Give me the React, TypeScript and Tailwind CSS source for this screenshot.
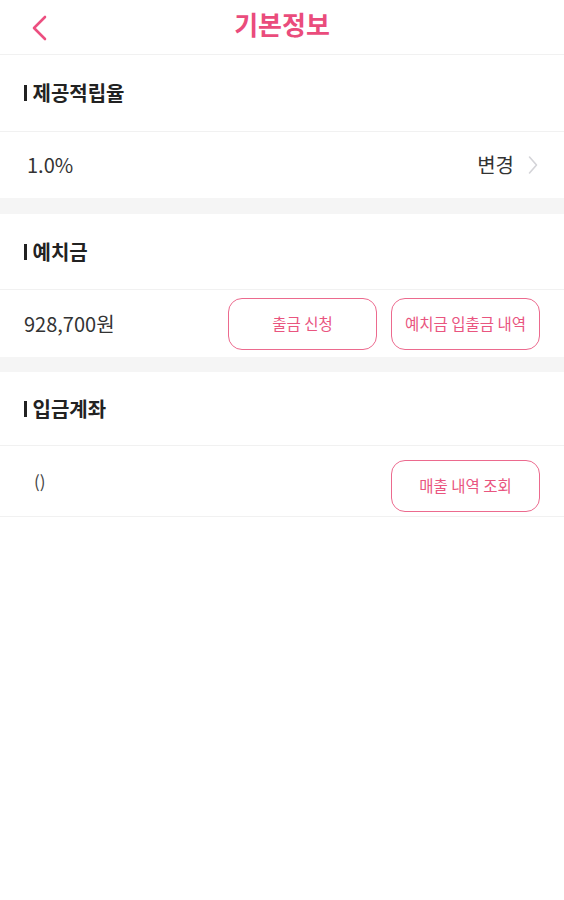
import React from 'react';

const font = {fontFamily: '"Noto Sans CJK KR", "Noto Sans", sans-serif'};

const SectionTitle: React.FC<{title: string; h: string}> = ({title, h}) => (
    <div className={`flex ${h} items-center border-b border-[#f1f1f1] pl-[24px]`}>
        <span className="mr-[6px] h-[16px] w-[2.5px] bg-[#222]"/>
        <span className="text-[20px] font-bold text-[#222]">{title}</span>
    </div>
);

const PinkButton: React.FC<{label: string; className?: string}> = ({label, className}) => (
    <button
        className={`flex h-[52px] w-[149px] items-center justify-center rounded-[14px] border-[1.5px] border-[#ec6a8e] bg-white text-[15.5px] text-[#e9557f] ${className ?? ''}`}>
        {label}
    </button>
);

export default function App() {
    return (
        <div className="min-h-[900px] w-full bg-white" style={font}>
            {/* header */}
            <div className="relative flex h-[55px] items-center justify-center border-b border-[#f1f1f1]">
                <button className="absolute left-[27px] top-[11px] p-1">
                    <svg width="18" height="26" viewBox="0 0 18 26" fill="none">
                        <path d="M14 2 L3 13 L14 24" stroke="#ec4f80" strokeWidth="2.6" strokeLinecap="round"
                              strokeLinejoin="round"/>
                    </svg>
                </button>
                <h1 className="-mt-[6px] text-[26px] font-bold leading-none text-[#ea4c7c]">기본정보</h1>
            </div>

            {/* 제공적립율 */}
            <SectionTitle title="제공적립율" h="h-[77px]"/>
            <div className="flex h-[66px] items-center justify-between pl-[27px] pr-[26px]">
                <span className="text-[20px] text-[#333]">1.0%</span>
                <div className="flex items-center gap-[14px]">
                    <span className="text-[20px] text-[#333]">변경</span>
                    <svg width="10" height="20" viewBox="0 0 10 20" fill="none">
                        <path d="M1.5 2 L8.5 10 L1.5 18" stroke="#d4d4d8" strokeWidth="1.6" strokeLinecap="round"
                              strokeLinejoin="round"/>
                    </svg>
                </div>
            </div>
            <div className="h-[16px] bg-[#f5f5f5]"/>

            {/* 예치금 */}
            <SectionTitle title="예치금" h="h-[76px]"/>
            <div className="flex h-[67px] items-center pl-[24px] pr-[24px]">
                <span className="flex-1 text-[20px] text-[#333]">928,700원</span>
                <div className="flex gap-[14px]">
                    <PinkButton label="출금 신청"/>
                    <PinkButton label="예치금 입출금 내역"/>
                </div>
            </div>
            <div className="h-[15px] bg-[#f5f5f5]"/>

            {/* 입금계좌 */}
            <SectionTitle title="입금계좌" h="h-[74px]"/>
            <div className="flex h-[71px] items-center border-b border-[#f1f1f1] pl-[34px] pr-[24px]">
                <span className="flex-1 text-[17px] text-[#444]">()</span>
                <PinkButton label="매출 내역 조회" className="mt-[9px]"/>
            </div>
        </div>
    );
}
